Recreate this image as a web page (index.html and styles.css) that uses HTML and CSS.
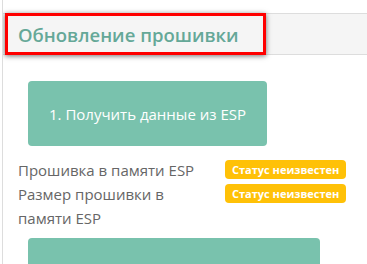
FILE: index.html
```html
<!DOCTYPE html>
<html lang="ru">
<head>
  <meta charset="UTF-8">
  <title>Обновление прошивки</title>
  <link rel="stylesheet" href="styles.css">
</head>
<body>

<div class="panel">
  <div class="panel-heading">
    <h3>Обновление прошивки</h3>
    <div class="mark"></div>
  </div>
  <div class="panel-body">
    <button class="btn-main">1. Получить данные из ESP</button>
    <div class="info">
      <span class="label">Прошивка в памяти ESP</span>
      <span class="badge">Статус неизвестен</span>
      <span class="label">Размер прошивки в памяти ESP</span>
      <span class="badge">Статус неизвестен</span>
    </div>
    <button class="btn-main btn-wide">&nbsp;</button>
  </div>
</div>

</body>
</html>
```

FILE: styles.css
```css
body { margin: 0; font-family: "Open Sans", Arial, sans-serif; background: #fff; }
.panel {
  margin-left: 2px; padding-top: 13px;
  border-left: 1px solid #ddd;
  height: 264px; box-sizing: border-box; overflow: hidden;
}
.panel-heading {
  position: relative;
  height: 42px; box-sizing: border-box;
  background: #f5f5f5;
  border-top: 1px solid #ddd; border-bottom: 1px solid #ddd;
  padding-left: 15px;
  display: flex; align-items: center;
}
.panel-heading h3 {
  margin: 0; font-size: 18.5px; font-weight: 600;
  color: #65a898;
}
.mark {
  position: absolute; left: 2px; top: -1px;
  width: 261px; height: 42px; box-sizing: border-box;
  border: 3px solid #f00;
  box-shadow: 0 1px 5px rgba(0, 0, 0, 0.55);
}
.panel-body { padding: 26px 0 0 15px; }
.btn-main {
  display: block; margin-left: 10px;
  width: 239px; height: 65px;
  background: #79c2ad; color: #fff;
  border: none; border-radius: 4px;
  font-family: inherit; font-size: 15px;
}
.btn-wide { width: 292px; margin-top: 8px; }
.info {
  display: grid; grid-template-columns: 207px auto;
  margin-top: 12px;
  font-size: 15px; line-height: 24px; color: #666;
}
.label { padding-right: 6px; }
.badge {
  justify-self: start; align-self: start;
  margin-top: 2px;
  background: #ffc107; color: #fff;
  font-size: 11px; font-weight: 700; line-height: 19px;
  padding: 0 7px; border-radius: 4px;
}
```
